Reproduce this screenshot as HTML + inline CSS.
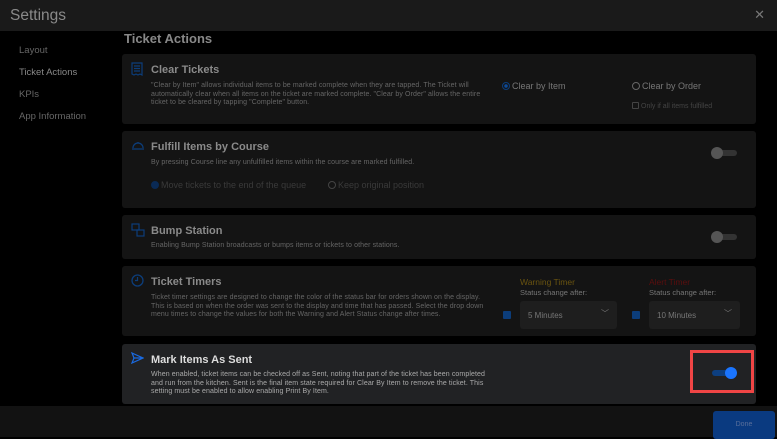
<!DOCTYPE html><html><head><style>
*{margin:0;padding:0;box-sizing:border-box}
body{width:777px;height:437px;background:#000;font-family:"Liberation Sans",sans-serif;position:relative;overflow:hidden;color:#777}
.hdr{position:absolute;left:0;top:0;width:777px;height:31px;background:#1a1a1a}
.hdr .t{position:absolute;left:10px;top:7px;font-size:15.5px;color:#8a8a8a}
.hdr .x{position:absolute;right:12px;top:7px;font-size:13px;color:#777}
.nav{position:absolute;left:19px;font-size:9.5px;color:#666}
.h1{position:absolute;left:124px;top:31px;font-size:13px;font-weight:bold;color:#888}
.card{position:absolute;left:122px;width:634px;background:#141414;border-radius:3px}
.ct{position:absolute;left:29px;top:10px;font-size:11px;font-weight:bold;color:#8a8a8a}
.cd{position:absolute;left:29px;font-size:7px;line-height:8.6px;color:#666;letter-spacing:0.1px}
.ico{position:absolute;left:9px;top:8px}
.tog{position:absolute;width:24px;height:6px;border-radius:3px;background:#333}
.tog i{position:absolute;left:-2px;top:-3px;width:12px;height:12px;border-radius:50%;background:#555}
.rad{position:absolute;font-size:9px;color:#777}
.rad b{display:inline-block;width:8px;height:8px;border-radius:50%;border:1px solid #666;vertical-align:-1px;margin-right:2px}
.sel{position:absolute;width:97px;height:28px;background:#1e1e1e;border-radius:3px;font-size:8px;color:#777;padding:10px 0 0 8px}
.cb{position:absolute;width:8px;height:8px;background:#0c3d7a;border-radius:1px}
</style></head><body>
<div class="hdr"><div class="t">Settings</div><div class="x">✕</div></div>
<div class="nav" style="top:45px">Layout</div>
<div class="nav" style="top:67px;color:#888">Ticket Actions</div>
<div class="nav" style="top:89px">KPIs</div>
<div class="nav" style="top:111px">App Information</div>
<div class="h1">Ticket Actions</div>

<div class="card" style="top:54px;height:70px">
<svg class="ico" width="12" height="14" viewBox="0 0 12 14"><path d="M1 1h10v12l-2-1-2 1-2-1-2 1-2-1z M3 4h6M3 6.5h6M3 9h6" fill="none" stroke="#0c3d7a" stroke-width="1.2"/></svg>
<div class="ct">Clear Tickets</div>
<div class="cd" style="top:28px;width:335px">"Clear by Item" allows individual items to be marked complete when they are tapped. The Ticket will automatically clear when all items on the ticket are marked complete. "Clear by Order" allows the entire ticket to be cleared by tapping "Complete" button.</div>
<div class="rad" style="left:380px;top:27px"><b style="border-color:#0c3d7a;background:radial-gradient(#0c4a9a 40%,transparent 45%)"></b>Clear by Item</div>
<div class="rad" style="left:510px;top:27px"><b></b>Clear by Order</div>
<div class="rad" style="left:510px;top:48px;font-size:7px;color:#444"><b style="border-radius:1px;width:7px;height:7px;border-color:#444"></b>Only if all items fulfilled</div>
</div>

<div class="card" style="top:131px;height:77px">
<svg class="ico" width="14" height="12" viewBox="0 0 14 12"><path d="M1 10h12M2 9a5 5 0 0 1 10 0M7 3v1" fill="none" stroke="#0c3d7a" stroke-width="1.3"/></svg>
<div class="ct">Fulfill Items by Course</div>
<div class="cd" style="top:28px">By pressing Course line any unfulfilled items within the course are marked fulfilled.</div>
<div class="rad" style="left:29px;top:49px;color:#3a3a3a"><b style="border-color:#0a2a55;background:#0a2a55"></b>Move tickets to the end of the queue</div>
<div class="rad" style="left:206px;top:49px;color:#3a3a3a"><b style="border-color:#444"></b>Keep original position</div>
<div class="tog" style="left:591px;top:19px"><i></i></div>
</div>

<div class="card" style="top:215px;height:44px">
<svg class="ico" width="14" height="14" viewBox="0 0 14 14"><rect x="1" y="1" width="7" height="6" fill="none" stroke="#0c3d7a" stroke-width="1.2"/><rect x="6" y="7" width="7" height="6" fill="none" stroke="#0c3d7a" stroke-width="1.2"/></svg>
<div class="ct">Bump Station</div>
<div class="cd" style="top:27px">Enabling Bump Station broadcasts or bumps items or tickets to other stations.</div>
<div class="tog" style="left:591px;top:19px"><i></i></div>
</div>

<div class="card" style="top:266px;height:70px">
<svg class="ico" width="13" height="13" viewBox="0 0 13 13"><circle cx="6.5" cy="6.5" r="5.5" fill="none" stroke="#0c3d7a" stroke-width="1.3"/><path d="M6.5 3v3.5H4" fill="none" stroke="#0c3d7a" stroke-width="1.2"/></svg>
<div class="ct">Ticket Timers</div>
<div class="cd" style="top:28px;width:340px">Ticket timer settings are designed to change the color of the status bar for orders shown on the display. This is based on when the order was sent to the display and time that has passed. Select the drop down menu times to change the values for both the Warning and Alert Status change after times.</div>
<div style="position:absolute;left:398px;top:11px;font-size:8.5px;color:#6a5410">Warning Timer</div>
<div style="position:absolute;left:398px;top:22px;font-size:7.5px;color:#777">Status change after:</div>
<div style="position:absolute;left:527px;top:11px;font-size:8.5px;color:#5a0e0e">Alert Timer</div>
<div style="position:absolute;left:527px;top:22px;font-size:7.5px;color:#777">Status change after:</div>
<div class="cb" style="left:381px;top:45px"></div>
<div class="sel" style="left:398px;top:35px">5 Minutes<span style="position:absolute;right:8px;top:7px">﹀</span></div>
<div class="cb" style="left:510px;top:45px"></div>
<div class="sel" style="left:527px;top:35px;width:91px">10 Minutes<span style="position:absolute;right:8px;top:7px">﹀</span></div>
</div>

<div class="card" style="top:344px;height:60px;background:#212224">
<svg class="ico" width="13" height="12" viewBox="0 0 13 12"><path d="M1 1l11 5-11 5 2-5z M3 6h9" fill="none" stroke="#1a6ae0" stroke-width="1.2"/></svg>
<div class="ct" style="color:#ddd">Mark Items As Sent</div>
<div class="cd" style="top:27px;width:345px;color:#aaa">When enabled, ticket items can be checked off as Sent, noting that part of the ticket has been completed and run from the kitchen. Sent is the final item state required for Clear By Item to remove the ticket. This setting must be enabled to allow enabling Print By Item.</div>
<div style="position:absolute;left:568px;top:6px;width:64px;height:43px;border:3px solid #f04545"></div>
<div class="tog" style="left:590px;top:26px;background:#0d3f80"><i style="left:13px;background:#1a75ff"></i></div>
</div>

<div style="position:absolute;left:0;top:406px;width:777px;height:31px;background:#121212"></div>
<div style="position:absolute;left:713px;top:411px;width:62px;height:28px;background:#0a3a80;border-radius:3px;font-size:7px;text-align:center;padding-top:10px;color:#5a6f9a">Done</div>
</body></html>
